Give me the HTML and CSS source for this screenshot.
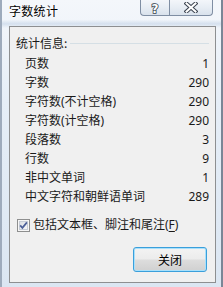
FILE: index.html
```html
<!DOCTYPE html>
<html lang="zh-CN">
<head>
<meta charset="utf-8">
<title>字数统计</title>
<link rel="stylesheet" href="styles.css">
</head>
<body>
<div class="window">
  <div class="titlebar">
    <span class="title">字数统计</span>
    <div class="caption-buttons">
      <div class="cap-btn help">
        <svg width="12" height="12" viewBox="0 0 12 12"><text x="6" y="10.5" text-anchor="middle" class="glyph">?</text></svg>
      </div>
      <div class="cap-btn close">
        <svg width="14" height="11" viewBox="0 0 14 11">
          <path d="M2.5 1.5 L11.5 9.5 M11.5 1.5 L2.5 9.5" stroke="#3b4350" stroke-width="4" stroke-linecap="square" fill="none"/>
          <path d="M2.5 1.5 L11.5 9.5 M11.5 1.5 L2.5 9.5" stroke="#ffffff" stroke-width="2" stroke-linecap="square" fill="none"/>
        </svg>
      </div>
    </div>
  </div>
  <div class="client">
    <div class="group-header"><span class="group-label">统计信息:</span><span class="rule"></span></div>
    <div class="stats">
      <div class="row"><span>页数</span><span class="num">1</span></div>
      <div class="row"><span>字数</span><span class="num">290</span></div>
      <div class="row"><span>字符数(不计空格)</span><span class="num">290</span></div>
      <div class="row"><span>字符数(计空格)</span><span class="num">290</span></div>
      <div class="row"><span>段落数</span><span class="num">3</span></div>
      <div class="row"><span>行数</span><span class="num">9</span></div>
      <div class="row"><span>非中文单词</span><span class="num">1</span></div>
      <div class="row"><span>中文字符和朝鲜语单词</span><span class="num">289</span></div>
    </div>
    <div class="check-row">
      <span class="checkbox">
        <svg width="13" height="13" viewBox="0 0 13 13">
          <defs>
            <linearGradient id="cbg" x1="0" y1="0" x2="1" y2="1">
              <stop offset="0" stop-color="#d9dde3"/>
              <stop offset="1" stop-color="#f7f8fa"/>
            </linearGradient>
          </defs>
          <rect x="0.5" y="0.5" width="12" height="12" fill="#f6f6f6" stroke="#8e8f8f"/>
          <rect x="2.5" y="2.5" width="8" height="8" fill="url(#cbg)" stroke="#c6ccd6"/>
          <path d="M3.2 6.4 L5.4 8.9 L9.9 3.4" fill="none" stroke="#4b5f98" stroke-width="1.7"/>
        </svg>
      </span>
      <span class="check-label">包括文本框、脚注和尾注(<u>F</u>)</span>
    </div>
    <div class="actions">
      <button class="btn">关闭</button>
    </div>
  </div>
</div>
</body>
</html>
```

FILE: styles.css
```css
html, body {
  margin: 0;
  padding: 0;
}

body {
  width: 223px;
  height: 287px;
  overflow: hidden;
  font-family: "Noto Sans", "Noto Sans CJK SC", sans-serif;
  font-size: 12px;
  color: #1a1a1a;
}

.window {
  width: 223px;
  height: 287px;
  box-sizing: border-box;
  display: flex;
  flex-direction: column;
  background:
    linear-gradient(180deg, rgba(255,255,255,0) 70%, rgba(160,185,215,0.35) 85%, rgba(255,255,255,0) 100%) top / 100% 28px no-repeat,
    linear-gradient(180deg, #f4f7fb 0%, #e6eef7 35%, #dbe6f2 100%);
  box-shadow: inset 2px 0 0 #9eabbc, inset -2px 0 0 #7a8696;
}

.titlebar {
  height: 26px;
  box-sizing: border-box;
  display: flex;
  justify-content: space-between;
  align-items: flex-start;
  padding: 0 10px 0 9px;
  flex: none;
}

.title {
  font-family: "Noto Sans CJK SC", sans-serif;
  font-size: 12px;
  line-height: 14px;
  padding-top: 4px;
  letter-spacing: 0.3px;
  color: #000;
  text-shadow: 0 0 5px #fff, 0 0 3px #fff;
}

.caption-buttons {
  display: flex;
}

.cap-btn {
  height: 16px;
  box-sizing: border-box;
  border: 1px solid #7f8ea3;
  border-top: none;
  display: flex;
  align-items: center;
  justify-content: center;
  background: linear-gradient(180deg, #f3f6fa 0%, #e7edf4 50%, #d9e2ec 100%);
}

.cap-btn.help {
  width: 29px;
  border-right: none;
  border-radius: 0 0 0 4px;
}

.cap-btn.close {
  width: 44px;
  border-radius: 0 0 4px 0;
}

.glyph {
  font-family: "DejaVu Sans", sans-serif;
  font-weight: bold;
  font-size: 12px;
  fill: #ffffff;
  stroke: #3b4350;
  stroke-width: 1.6px;
  paint-order: stroke;
}

.client {
  margin: 0 7px 0 9px;
  height: 257px;
  box-sizing: border-box;
  border: 1px solid #8d8f91;
  background: #f0f0f0;
  padding: 8px 6px 0 6px;
  flex: none;
}

.group-header {
  display: flex;
  align-items: center;
  height: 16px;
}

.group-label {
  font-family: "Noto Sans CJK SC", sans-serif;
  line-height: 16px;
  white-space: nowrap;
}

.rule {
  flex: 1;
  height: 1px;
  margin-left: 3px;
  background: #d5dfe5;
}

.stats {
  margin-top: 3px;
}

.row {
  display: flex;
  justify-content: space-between;
  height: 19px;
  line-height: 19px;
  padding-left: 9px;
}

.num {
  font-family: "Noto Sans", sans-serif;
}

.check-row {
  display: flex;
  align-items: center;
  height: 16px;
  margin-top: 11px;
  padding-left: 1px;
}

.checkbox {
  width: 13px;
  height: 13px;
  display: block;
}

.checkbox svg {
  display: block;
}

.check-label {
  margin-left: 3px;
  line-height: 16px;
  white-space: nowrap;
}

.check-label u {
  text-decoration-thickness: 1px;
  text-underline-offset: 2px;
}

.actions {
  display: flex;
  justify-content: flex-end;
  padding-right: 2px;
  margin-top: 14px;
}

.btn {
  width: 74px;
  height: 25px;
  box-sizing: border-box;
  border: 1px solid #3a9fdb;
  border-radius: 3px;
  box-shadow: inset 0 0 0 1px #a8e0fb;
  background: linear-gradient(180deg, #f3f3f3 0%, #ececec 48%, #dddddd 52%, #d0d0d0 100%);
  font-family: "Noto Sans CJK SC", sans-serif;
  font-size: 12px;
  color: #000;
  padding: 0;
  line-height: 22px;
}
```
